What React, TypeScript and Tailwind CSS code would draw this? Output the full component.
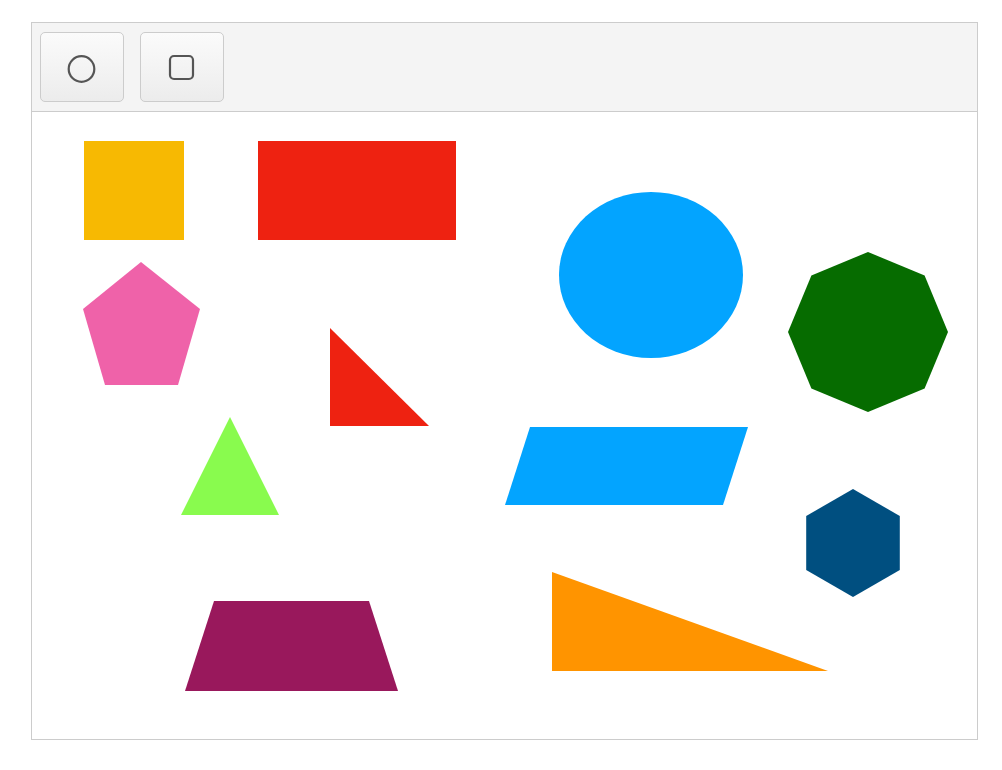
import React from "react";

function polygonPoints(cx: number, cy: number, r: number, sides: number) {
  const pts: string[] = [];
  for (let i = 0; i < sides; i++) {
    const a = -Math.PI / 2 + (i * 2 * Math.PI) / sides;
    pts.push(`${(cx + r * Math.cos(a)).toFixed(1)},${(cy + r * Math.sin(a)).toFixed(1)}`);
  }
  return pts.join(" ");
}

function ToolButton({ children }: { children: React.ReactNode }) {
  return (
    <button className="w-[84px] h-[70px] flex items-center justify-center rounded-[5px] border border-[#cccccc] bg-gradient-to-b from-[#fbfbfb] to-[#ececec]">
      {children}
    </button>
  );
}

export default function App() {
  return (
    <div className="w-[1002px] h-[770px] bg-white pt-[22px] pl-[31px]">
      <div className="w-[947px] border border-[#cccccc] flex flex-col">
        {/* Toolbar */}
        <div className="h-[89px] bg-[#f4f4f4] border-b border-[#cccccc] flex items-start gap-4 pl-2 pt-[9px]">
          <ToolButton>
            <svg width="30" height="34" viewBox="0 0 30 34">
              <circle cx="14.5" cy="19" r="12.8" fill="none" stroke="#555555" strokeWidth="2.2" />
            </svg>
          </ToolButton>
          <ToolButton>
            <svg width="28" height="30" viewBox="0 0 28 30">
              <rect x="2" y="4" width="23" height="23" rx="4" fill="none" stroke="#555555" strokeWidth="2.2" />
            </svg>
          </ToolButton>
        </div>

        {/* Canvas */}
        <div className="h-[627px] bg-white">
          <svg width="945" height="627" viewBox="0 0 945 627">
            <rect x="52" y="29" width="100" height="99" fill="#f7b902" />
            <rect x="226" y="29" width="198" height="99" fill="#ee2211" />
            <polygon points="109,150 168,197 146,273 73,273 51,197" fill="#ef62a9" />
            <polygon points="298,216 298,314 397,314" fill="#ee2211" />
            <polygon points="198,305 149,403 247,403" fill="#89fb4e" />
            <ellipse cx="619" cy="163" rx="92" ry="83" fill="#03a4ff" />
            <polygon points="498,315 716,315 691,393 473,393" fill="#03a4ff" />
            <polygon points={polygonPoints(836, 220, 80, 8)} fill="#066c00" />
            <polygon points={polygonPoints(821, 431, 54, 6)} fill="#004f80" />
            <polygon points="182,489 337,489 366,579 153,579" fill="#99185c" />
            <polygon points="520,460 520,559 796,559" fill="#ff9400" />
          </svg>
        </div>
      </div>
    </div>
  );
}
